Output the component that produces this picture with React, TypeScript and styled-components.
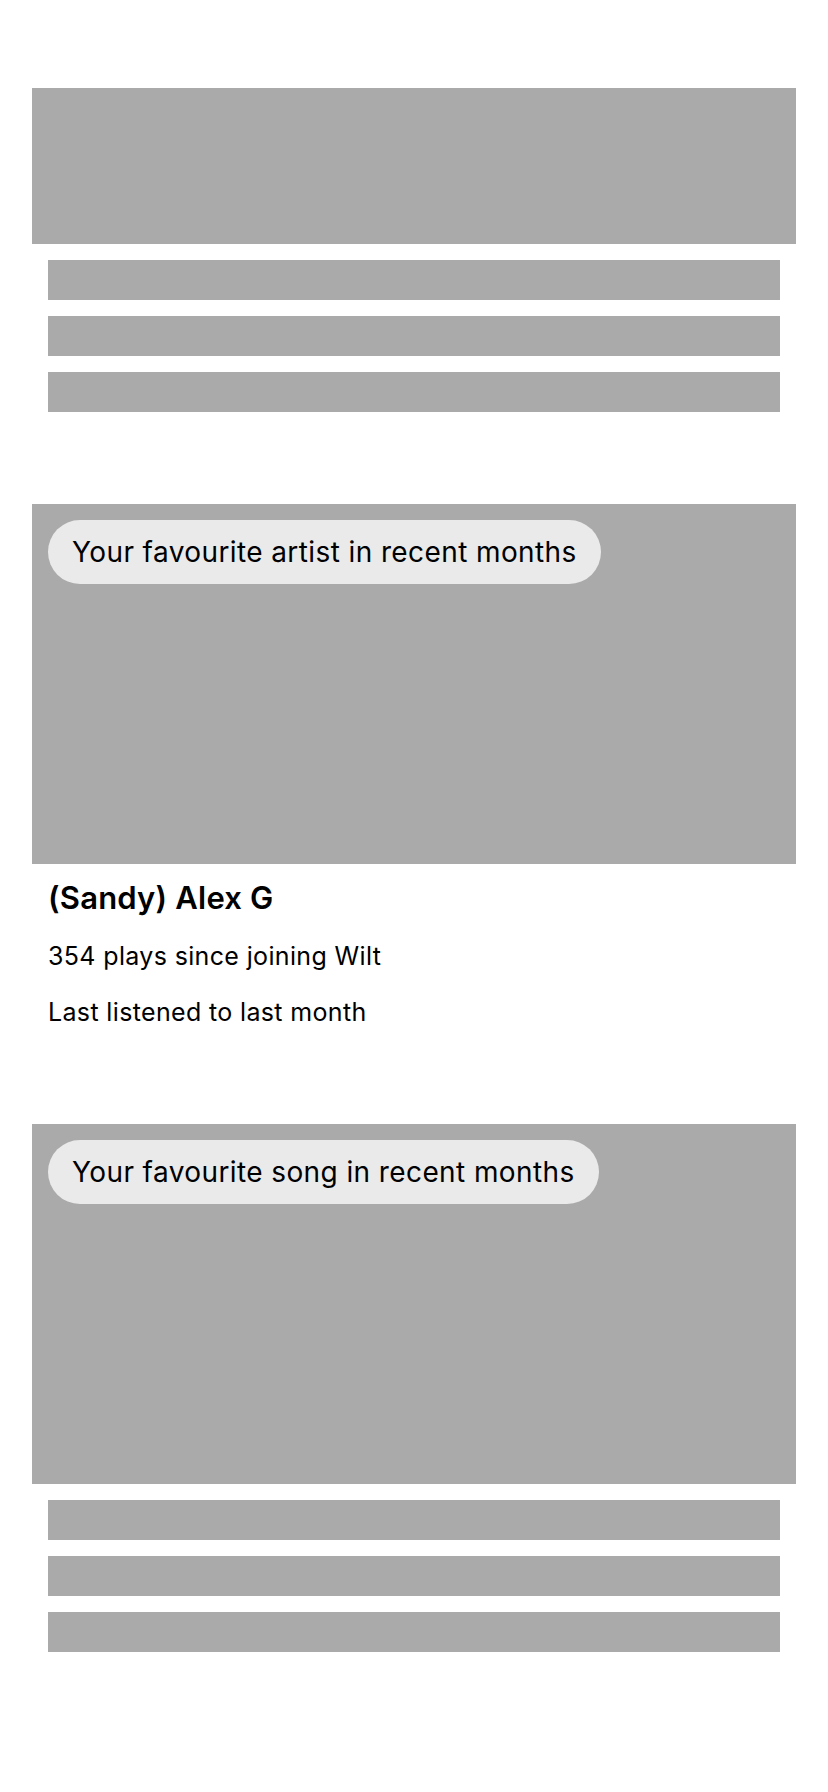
import React from "react";
import styled, { createGlobalStyle } from "styled-components";

const GlobalStyle = createGlobalStyle`
  html, body {
    margin: 0;
    padding: 0;
    background: #ffffff;
  }
  body {
    font-family: Inter, "Noto Sans", "Liberation Sans", sans-serif;
    color: #000000;
    -webkit-font-smoothing: antialiased;
  }
`;

const Page = styled.main`
  display: flex;
  flex-direction: column;
  gap: 76px;
  padding: 88px 32px 120px;
  min-height: 1792px;
  box-sizing: border-box;
`;

const Section = styled.section`
  display: flex;
  flex-direction: column;
`;

const Hero = styled.div<{ $height: number }>`
  display: flex;
  flex-direction: column;
  align-items: flex-start;
  box-sizing: border-box;
  height: ${(p) => p.$height}px;
  padding: 16px;
  background: #aaaaaa;
`;

const Pill = styled.div`
  display: flex;
  align-items: center;
  height: 64px;
  padding: 0 24px;
  border-radius: 32px;
  background: #eaeaea;
  font-size: 28px;
  font-weight: 400;
  letter-spacing: 0.4px;
  white-space: nowrap;
`;

const Placeholders = styled.div`
  display: flex;
  flex-direction: column;
  gap: 16px;
  padding: 16px;
`;

const Bar = styled.div`
  height: 40px;
  background: #aaaaaa;
`;

const Details = styled.div`
  display: flex;
  flex-direction: column;
  gap: 24px;
  padding: 16px 16px 20px;
`;

const Title = styled.h2`
  margin: 0;
  font-size: 31px;
  line-height: 36px;
  font-weight: 600;
  letter-spacing: 0.2px;
`;

const Line = styled.p`
  margin: 0;
  font-size: 25px;
  line-height: 32px;
  font-weight: 400;
  letter-spacing: 0.35px;
`;

const SkeletonList = () => (
  <Placeholders>
    <Bar />
    <Bar />
    <Bar />
  </Placeholders>
);

export default function App() {
  return (
    <>
      <GlobalStyle />
      <Page>
        <Section>
          <Hero $height={156} />
          <SkeletonList />
        </Section>

        <Section>
          <Hero $height={360}>
            <Pill>Your favourite artist in recent months</Pill>
          </Hero>
          <Details>
            <Title>(Sandy) Alex G</Title>
            <Line>354 plays since joining Wilt</Line>
            <Line>Last listened to last month</Line>
          </Details>
        </Section>

        <Section>
          <Hero $height={360}>
            <Pill>Your favourite song in recent months</Pill>
          </Hero>
          <SkeletonList />
        </Section>
      </Page>
    </>
  );
}
